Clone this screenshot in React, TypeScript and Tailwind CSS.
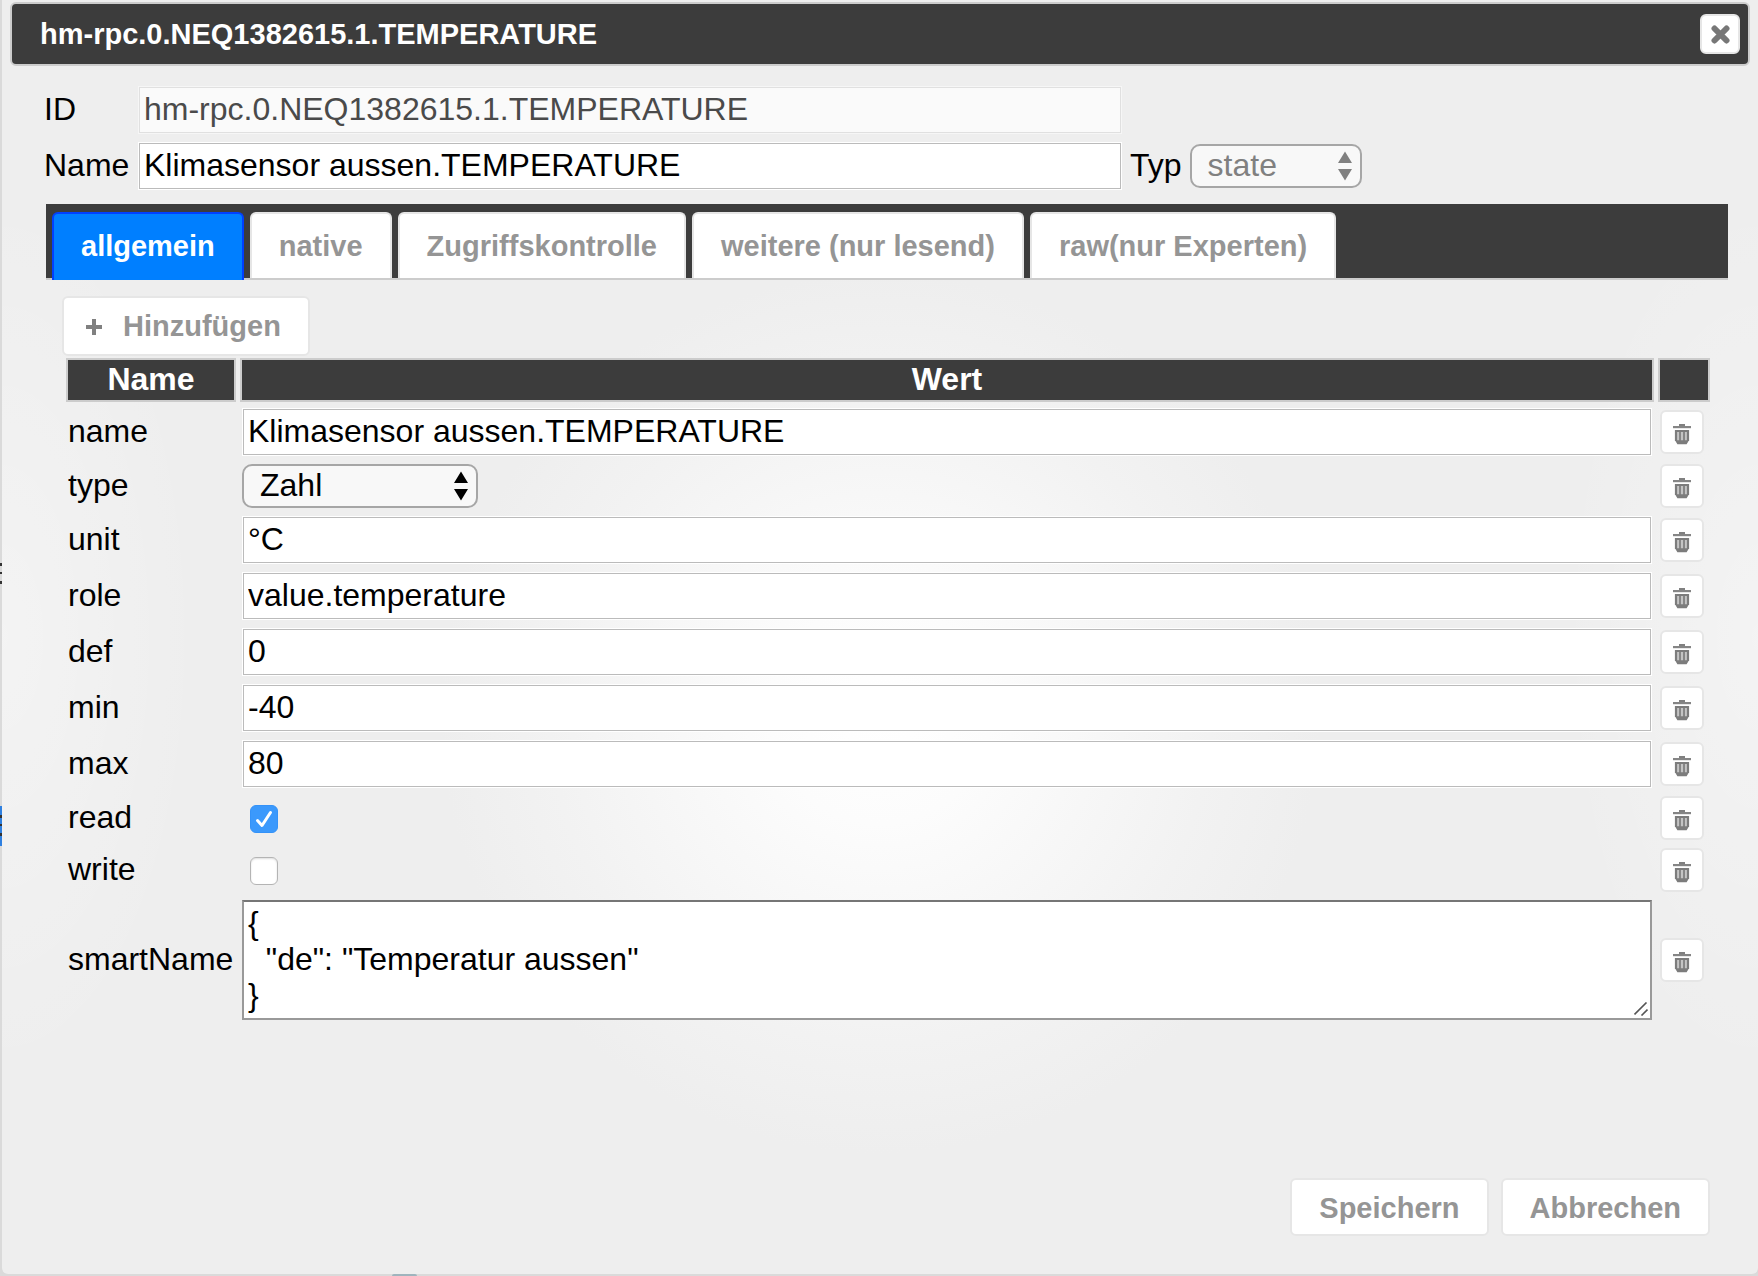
import { useState } from 'react'
import type { ReactNode } from 'react'

type Field = {
  key: string
  kind: 'text' | 'select' | 'checkbox' | 'textarea'
  value?: string
  checked?: boolean
}

const tabs = ['allgemein', 'native', 'Zugriffskontrolle', 'weitere (nur lesend)', 'raw(nur Experten)']

const fields: Field[] = [
  { key: 'name', kind: 'text', value: 'Klimasensor aussen.TEMPERATURE' },
  { key: 'type', kind: 'select', value: 'Zahl' },
  { key: 'unit', kind: 'text', value: '°C' },
  { key: 'role', kind: 'text', value: 'value.temperature' },
  { key: 'def', kind: 'text', value: '0' },
  { key: 'min', kind: 'text', value: '-40' },
  { key: 'max', kind: 'text', value: '80' },
  { key: 'read', kind: 'checkbox', checked: true },
  { key: 'write', kind: 'checkbox', checked: false },
  { key: 'smartName', kind: 'textarea', value: '{\n  "de": "Temperatur aussen"\n}' },
]

const inputClass =
  'block h-12 w-full border border-white bg-white px-[5px] pb-[2px] text-[32px] leading-9 text-black shadow-[inset_0_0_0_1px_#bbbbbb] outline-none'

const buttonClass = 'rounded-md border-2 border-[#e6e6e6] bg-white text-[29px] font-bold text-[#959595]'

function TrashIcon() {
  return (
    <svg width="20" height="22" viewBox="0 0 20 22" fill="none" aria-hidden="true">
      <path d="M7 1h6v2H7z" fill="#808080" />
      <path d="M1 3h18v2.200H1z" fill="#858585" />
      <path d="M3 7h14v10.500L14.500 21h-9L3 17.500z" fill="#c4c4c4" />
      <path d="M3 8h14" stroke="#7c7c7c" strokeWidth="2" />
      <path d="M4 7v11M16 7v11" stroke="#7c7c7c" strokeWidth="2.200" />
      <path d="M8 7v11M12 7v11" stroke="#7c7c7c" strokeWidth="1.700" />
      <path d="M3.200 17.200h13.600L14.600 21.300H5.400z" fill="#7c7c7c" />
    </svg>
  )
}

function CloseIcon() {
  return (
    <svg width="20" height="20" viewBox="0 0 20 20" aria-hidden="true">
      <path d="M4.500 4.500l12 12M16.500 4.500l-12 12" stroke="#777777" strokeWidth="6" strokeLinecap="round" />
    </svg>
  )
}

function PlusIcon() {
  return (
    <svg width="18" height="20" viewBox="0 0 18 20" aria-hidden="true">
      <path d="M9 3v16M1 11h16" stroke="#808080" strokeWidth="4" />
    </svg>
  )
}

function SelectBox({
  id,
  options,
  disabled,
  className,
}: {
  id: string
  options: string[]
  disabled?: boolean
  className: string
}) {
  return (
    <div className={`relative ${className} ${disabled ? 'text-[#808080]' : 'text-black'}`}>
      <select
        id={id}
        disabled={disabled}
        className="block h-11 w-full appearance-none rounded-[10px] border-2 border-[#a6a6a6] bg-[#f8f8f8] pb-[2px] pl-4 pr-8 text-[32px] leading-9 outline-none disabled:opacity-100"
      >
        {options.map((option) => (
          <option key={option}>{option}</option>
        ))}
      </select>
      <svg
        className="pointer-events-none absolute right-[9px] top-[7px]"
        width="16"
        height="30"
        viewBox="0 0 16 30"
        fill="currentColor"
        aria-hidden="true"
      >
        <path d="M8 0.500l7 11.500H1zM8 29.500l7-11.500H1z" />
      </svg>
    </div>
  )
}

function CheckBox({ id, defaultChecked }: { id: string; defaultChecked?: boolean }) {
  return (
    <div className="relative ml-2 mt-[2px] h-7 w-7">
      <input
        id={id}
        type="checkbox"
        defaultChecked={defaultChecked}
        className="peer block h-7 w-7 appearance-none rounded-md border border-[#b4b4b4] bg-white shadow-[inset_0_1px_2px_#dddddd] checked:border-[#3492f8] checked:bg-[#3b99fc] checked:shadow-none"
      />
      <svg
        className="pointer-events-none absolute inset-0 hidden peer-checked:block"
        width="28"
        height="28"
        viewBox="0 0 28 28"
        fill="none"
        aria-hidden="true"
      >
        <path d="M7.500 15.500l4.500 5L20.500 7.500" stroke="white" strokeWidth="3" strokeLinecap="round" strokeLinejoin="round" />
      </svg>
    </div>
  )
}

function FieldControl({ field }: { field: Field }) {
  const id = `field-${field.key}`

  if (field.kind === 'select') {
    return <SelectBox id={id} options={['Zahl', 'Zeichenkette', 'Logikwert']} className="w-[236px]" />
  }
  if (field.kind === 'checkbox') {
    return <CheckBox id={id} defaultChecked={field.checked} />
  }
  if (field.kind === 'textarea') {
    return (
      <div className="relative">
        <textarea
          id={id}
          rows={3}
          defaultValue={field.value}
          className="block w-full resize-none overflow-hidden border-2 border-[#999999] border-t-[#767676] bg-white px-1 pb-[5px] pt-[3px] text-[32px] leading-9 text-black outline-none"
        />
        <svg
          className="pointer-events-none absolute bottom-1 right-1"
          width="14"
          height="14"
          viewBox="0 0 14 14"
          aria-hidden="true"
        >
          <path d="M0.500 12.500L12.500 0.500M7.500 13.500L13.500 7.500" stroke="#555555" strokeWidth="1.600" />
        </svg>
      </div>
    )
  }
  return <input id={id} type="text" defaultValue={field.value} className={inputClass} />
}

function HeadCell({ children, className }: { children?: ReactNode; className?: string }) {
  return (
    <th className={`h-11 border-2 border-[#cccccc] bg-[#3c3c3c] p-0 pb-[2px] font-bold leading-9 text-white ${className ?? ''}`}>
      {children}
    </th>
  )
}

export default function App() {
  const [activeTab, setActiveTab] = useState(0)

  return (
    <div className="flex min-h-screen flex-col bg-[#dadada] font-['Liberation_Sans',Arial,sans-serif] text-[32px] leading-9 text-black">
      <div className="flex flex-1">
        {/* Page behind the dialog */}
        <div className="flex w-[2px] shrink-0 flex-col">
          <div className="mt-[563px] h-[3px] bg-[#333333]" />
          <div className="mt-[6px] h-[2px] bg-[#333333]" />
          <div className="mt-[7px] h-[3px] bg-[#333333]" />
          <div className="mt-[222px] flex h-10 flex-col bg-[#2f80e0] pt-[9px]">
            <div className="h-[3px] bg-[#333333]" />
            <div className="mt-[6px] h-[2px] bg-[#333333]" />
            <div className="mt-[7px] h-[3px] bg-[#333333]" />
          </div>
        </div>

        <div
          role="dialog"
          aria-labelledby="dialog-title"
          className="flex min-w-0 flex-1 flex-col rounded-b-md bg-[#eeeeee] bg-[radial-gradient(ellipse_200px_450px_at_0%_50%,#ffffff55,#ffffff00),radial-gradient(ellipse_200px_450px_at_100%_50%,#ffffff55,#ffffff00),radial-gradient(circle_440px_at_50%_56%,#ffffff_0%,#fcfcfc_25%,#f7f7f7_50%,#f2f2f2_75%,#eeeeee_100%)] px-2 pt-[2px]"
        >
          {/* Title bar */}
          <div className="flex h-16 items-center justify-between rounded-md border-2 border-[#cccccc] bg-[#3c3c3c] pl-7 pr-2">
            <h1 id="dialog-title" className="text-[29px] font-bold text-white">
              hm-rpc.0.NEQ1382615.1.TEMPERATURE
            </h1>
            <button
              type="button"
              aria-label="Close"
              className="flex h-10 w-10 items-center justify-center rounded-md border-2 border-[#e6e6e6] bg-white"
            >
              <CloseIcon />
            </button>
          </div>

          <div className="flex flex-col pl-[34px] pr-[22px] pt-5">
            {/* ID / name / type */}
            <div className="grid grid-cols-[94px_984px_auto] items-center justify-start gap-y-2">
              <label htmlFor="object-id" className="pb-[2px]">
                ID
              </label>
              <input
                id="object-id"
                type="text"
                disabled
                defaultValue="hm-rpc.0.NEQ1382615.1.TEMPERATURE"
                className="block h-12 w-full border border-[#f6f6f6] bg-[#fafafa] px-[5px] pb-[2px] leading-9 text-[#4a4a4a] shadow-[inset_0_0_0_1px_#e0e0e0]"
              />
              <span />
              <label htmlFor="object-name" className="pb-[2px]">
                Name
              </label>
              <input
                id="object-name"
                type="text"
                defaultValue="Klimasensor aussen.TEMPERATURE"
                className={inputClass}
              />
              <div className="flex items-center gap-2 pl-2">
                <label htmlFor="object-type" className="pb-[2px]">
                  Typ
                </label>
                <SelectBox id="object-type" options={['state']} disabled className="w-[172px]" />
              </div>
            </div>

            {/* Tabs */}
            <div
              role="tablist"
              className="ml-[2px] mt-[14px] flex h-[76px] gap-[6px] border-b-2 border-[#cccccc] bg-[#3c3c3c] px-[6px] pt-2"
            >
              {tabs.map((tab, index) => (
                <button
                  key={tab}
                  type="button"
                  role="tab"
                  aria-selected={index === activeTab}
                  onClick={() => setActiveTab(index)}
                  className={`rounded-t-md border-2 border-b-0 px-[27px] text-[29px] font-bold ${
                    index === activeTab
                      ? '-mb-[2px] border-[#0040ff] bg-[#007fff] pb-[2px] text-white'
                      : 'border-[#e6e6e6] bg-white text-[#959595]'
                  }`}
                >
                  {tab}
                </button>
              ))}
            </div>

            <div className="flex flex-col items-start pl-[18px] pr-[14px] pt-4">
              <button type="button" className={`${buttonClass} flex h-[60px] items-center gap-5 pl-[21px] pr-[27px]`}>
                <PlusIcon />
                Hinzufügen
              </button>

              <table className="-mt-[2px] w-full border-separate border-spacing-1">
                <thead>
                  <tr>
                    <HeadCell className="w-[170px]">Name</HeadCell>
                    <HeadCell>Wert</HeadCell>
                    <HeadCell className="w-[52px]" />
                  </tr>
                </thead>
                <tbody>
                  {fields.map((field) => (
                    <tr key={field.key}>
                      <td className="p-[2px]">
                        <label htmlFor={`field-${field.key}`} className="block pb-[2px]">
                          {field.key}
                        </label>
                      </td>
                      <td className="p-[2px]">
                        <FieldControl field={field} />
                      </td>
                      <td className="p-[2px]">
                        <button
                          type="button"
                          aria-label={`${field.key} löschen`}
                          className="flex h-11 w-11 items-center justify-center rounded-md border-2 border-[#e6e6e6] bg-white pt-1"
                        >
                          <TrashIcon />
                        </button>
                      </td>
                    </tr>
                  ))}
                </tbody>
              </table>
            </div>
          </div>

          {/* Dialog buttons */}
          <div className="mt-auto flex justify-end gap-3 pb-[38px] pr-10 pt-10">
            <button type="button" className={`${buttonClass} h-[58px] px-[27px] pt-[2px]`}>
              Speichern
            </button>
            <button type="button" className={`${buttonClass} h-[58px] px-[27px] pt-[2px]`}>
              Abbrechen
            </button>
          </div>
        </div>
      </div>
      <div className="h-[2px] pl-[392px]">
        <div className="h-[2px] w-[25px] rounded-t-sm bg-[#9fb4bd]" />
      </div>
    </div>
  )
}
